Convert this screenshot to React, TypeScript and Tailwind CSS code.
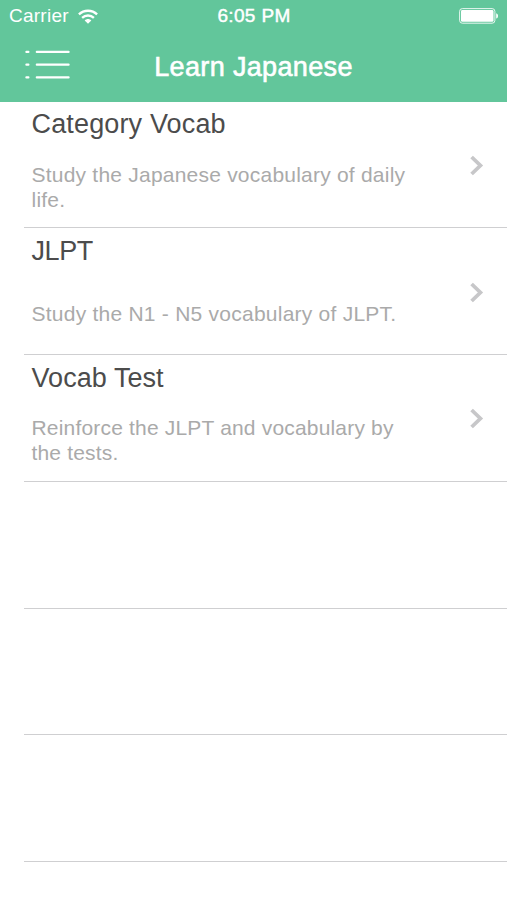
import clsx from "clsx";

const lessons = [
  { title: "Category Vocab", description: "Study the Japanese vocabulary of daily life.", titleClass: "tracking-[0.15px]", textClass: "tracking-[0.22px] pt-px" },
  { title: "JLPT", description: "Study the N1 - N5 vocabulary of JLPT.", titleClass: "tracking-[-0.4px]", textClass: "tracking-[0.24px]" },
  { title: "Vocab Test", description: "Reinforce the JLPT and vocabulary by the tests.", titleClass: "tracking-[0.05px]", textClass: "tracking-[0.18px]" },
];

const emptyRows = [0, 1, 2];

const WifiIcon = () => (
  <svg width="20" height="15" viewBox="0 0 20 15" fill="none" stroke="white" strokeWidth="2.3">
    <path d="M0.9 5.4C5.9 0.5 14.1 0.5 19.1 5.4" />
    <path d="M4.1 8.9C7.4 5.7 12.6 5.7 15.9 8.9" />
    <path d="M6.7 11.4C8.6 9.4 11.4 9.4 13.3 11.4L10 14.7Z" fill="white" stroke="none" />
  </svg>
);

const BatteryIcon = () => (
  <svg width="40" height="16" viewBox="0 0 40 16" fill="none">
    <rect x="0.6" y="0.6" width="35.3" height="14.6" rx="2.8" stroke="white" strokeOpacity="0.85" strokeWidth="1" />
    <rect x="2" y="2" width="32.5" height="11.8" rx="1.4" fill="white" />
    <path d="M37.2 5.2C39.6 5.8 39.6 10 37.2 10.6Z" fill="white" />
  </svg>
);

const MenuIcon = () => (
  <svg width="46" height="30" viewBox="0 0 46 30" stroke="white" strokeWidth="2.2" strokeLinecap="round">
    <path d="M2.4 1.9H4.4M12.8 1.9H44.6M2.4 14.7H4.4M12.8 14.7H44.6M2.4 27.4H4.4M12.8 27.4H44.6" />
  </svg>
);

const Chevron = () => (
  <svg width="14" height="21" viewBox="0 0 14 21" fill="none" stroke="#c7c7c9" strokeWidth="3.8">
    <path d="M1.6 2L10.4 10.5L1.6 19" />
  </svg>
);

const App = () => {
  return (
    <div className="h-[900px] overflow-hidden bg-white font-['Liberation_Sans',Arial,sans-serif]">
      <header className="h-[101.5px] bg-[#62c69b] text-white">
        {/* Status bar */}
        <div className="grid h-8 grid-cols-3 items-center pl-[9px] pr-2 text-[19px] leading-8">
          <div className="flex items-center gap-[9px]">
            <span className="tracking-[0.25px]">Carrier</span>
            <WifiIcon />
          </div>
          <span className="text-center tracking-[0.35px] [-webkit-text-stroke:0.45px_white]">6:05 PM</span>
          <div className="flex justify-end">
            <BatteryIcon />
          </div>
        </div>

        {/* Navigation bar */}
        <div className="grid h-[69px] grid-cols-[1fr_auto_1fr] items-center px-6">
          <button aria-label="Menu" className="w-fit pb-1">
            <MenuIcon />
          </button>
          <h1 className="text-[27px] leading-[70px] tracking-[0.35px] [-webkit-text-stroke:0.6px_white]">
            Learn Japanese
          </h1>
        </div>
      </header>

      <ul className="pl-6">
        {lessons.map((lesson) => (
          <li
            key={lesson.title}
            className="flex h-[126.75px] items-center justify-between border-b border-[#cfcfd1] pr-[23px] pl-[7.5px]"
          >
            <div className="flex h-full w-[390px] flex-col pt-[6.8px]">
              <h2 className={clsx("text-[27px] leading-8 text-[#4c4c4c]", lesson.titleClass)}>{lesson.title}</h2>
              <div className="flex h-[94px] items-center pt-[5.4px]">
                <p className={clsx("text-[21px] leading-[25px] text-[#aaaaaa]", lesson.textClass)}>
                  {lesson.description}
                </p>
              </div>
            </div>
            <div className="pt-[2px]">
              <Chevron />
            </div>
          </li>
        ))}
        {emptyRows.map((row) => (
          <li key={row} className="h-[126.75px] border-b border-[#cfcfd1]" />
        ))}
      </ul>
    </div>
  );
};

export default App;
